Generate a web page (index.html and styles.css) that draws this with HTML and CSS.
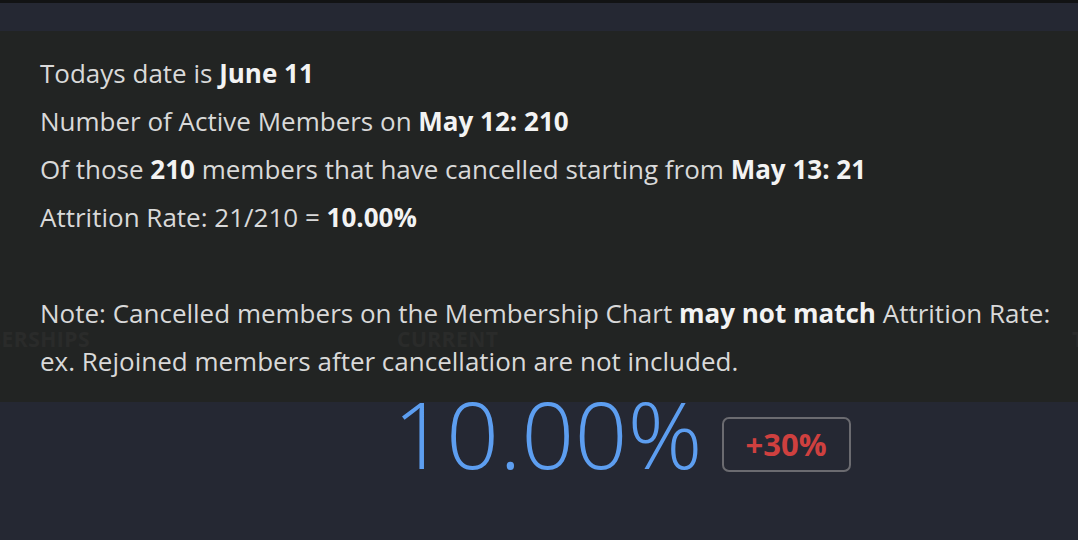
FILE: index.html
```html
<!DOCTYPE html>
<html lang="en">
<head>
    <meta charset="UTF-8">
    <meta name="viewport" content="width=device-width, initial-scale=1.0">
    <title>Attrition Rate</title>
    <link rel="stylesheet" href="styles.css">
</head>
<body>
    <div class="topbar"></div>

    <div class="stats">
        <div class="stat stat-prev">
            <div class="stat-label">MEMBERSHIPS</div>
        </div>
        <div class="stat stat-current">
            <div class="stat-label">CURRENT</div>
            <div class="stat-row">
                <span class="stat-value">10.00%</span>
                <span class="stat-change">+30%</span>
            </div>
        </div>
        <div class="stat stat-next">
            <div class="stat-label">TARGET</div>
            <div class="stat-row">
                <span class="stat-value">8.00%</span>
            </div>
        </div>
    </div>

    <div class="tooltip">
        <div class="tip-line">Todays date is <b>June 11</b></div>
        <div class="tip-line">Number of Active Members on <b>May 12: 210</b></div>
        <div class="tip-line">Of those <b>210</b> members that have cancelled starting from <b>May 13: 21</b></div>
        <div class="tip-line">Attrition Rate: 21/210 = <b>10.00%</b></div>
        <div class="tip-line tip-note">Note: Cancelled members on the Membership Chart <b>may not match</b> Attrition Rate:</div>
        <div class="tip-line">ex. Rejoined members after cancellation are not included.</div>
    </div>
</body>
</html>
```

FILE: styles.css
```css
body {
    font-family: 'Open Sans', 'Liberation Sans', sans-serif;
    background-color: #252833;
    margin: 0;
    height: 540px;
    overflow: hidden;
    position: relative;
}
.topbar {
    height: 3px;
    background-color: #121314;
}
.stats {
    display: flex;
    padding-top: 321px;
}
.stat {
    display: flex;
    flex-direction: column;
    flex-shrink: 0;
}
.stat-prev {
    width: 90px;
    align-items: flex-end;
}
.stat-current {
    margin-left: 307px;
    width: 675px;
}
.stat-next .stat-row {
    padding-left: 5px;
    margin-top: 30px;
}
.stat-label {
    font-size: 21px;
    font-weight: 700;
    line-height: 30px;
    letter-spacing: 0.5px;
    color: #6e717d;
    white-space: nowrap;
}
.stat-row {
    display: flex;
    align-items: center;
    margin-top: 34px;
}
.stat-value {
    margin-left: -4px;
    font-size: 93px;
    font-weight: 300;
    line-height: 90px;
    color: #5d9ef0;
    white-space: nowrap;
}
.stat-change {
    display: flex;
    align-items: center;
    box-sizing: border-box;
    height: 55px;
    margin-left: 19px;
    margin-top: 22px;
    padding: 0 22px;
    border: 2px solid #6b6b70;
    border-radius: 7px;
    font-size: 31px;
    font-weight: 700;
    color: #cf403f;
}
.tooltip {
    position: absolute;
    top: 31px;
    left: 0;
    right: 0;
    padding: 18px 40px 17px;
    background-color: rgba(34, 36, 33, 0.9);
    font-size: 26px;
    line-height: 48px;
    color: #d9d9d9;
}
.tooltip b {
    color: #f3f3f3;
    font-weight: 700;
}
.tip-line {
    white-space: nowrap;
}
.tip-note {
    margin-top: 48px;
}
```
